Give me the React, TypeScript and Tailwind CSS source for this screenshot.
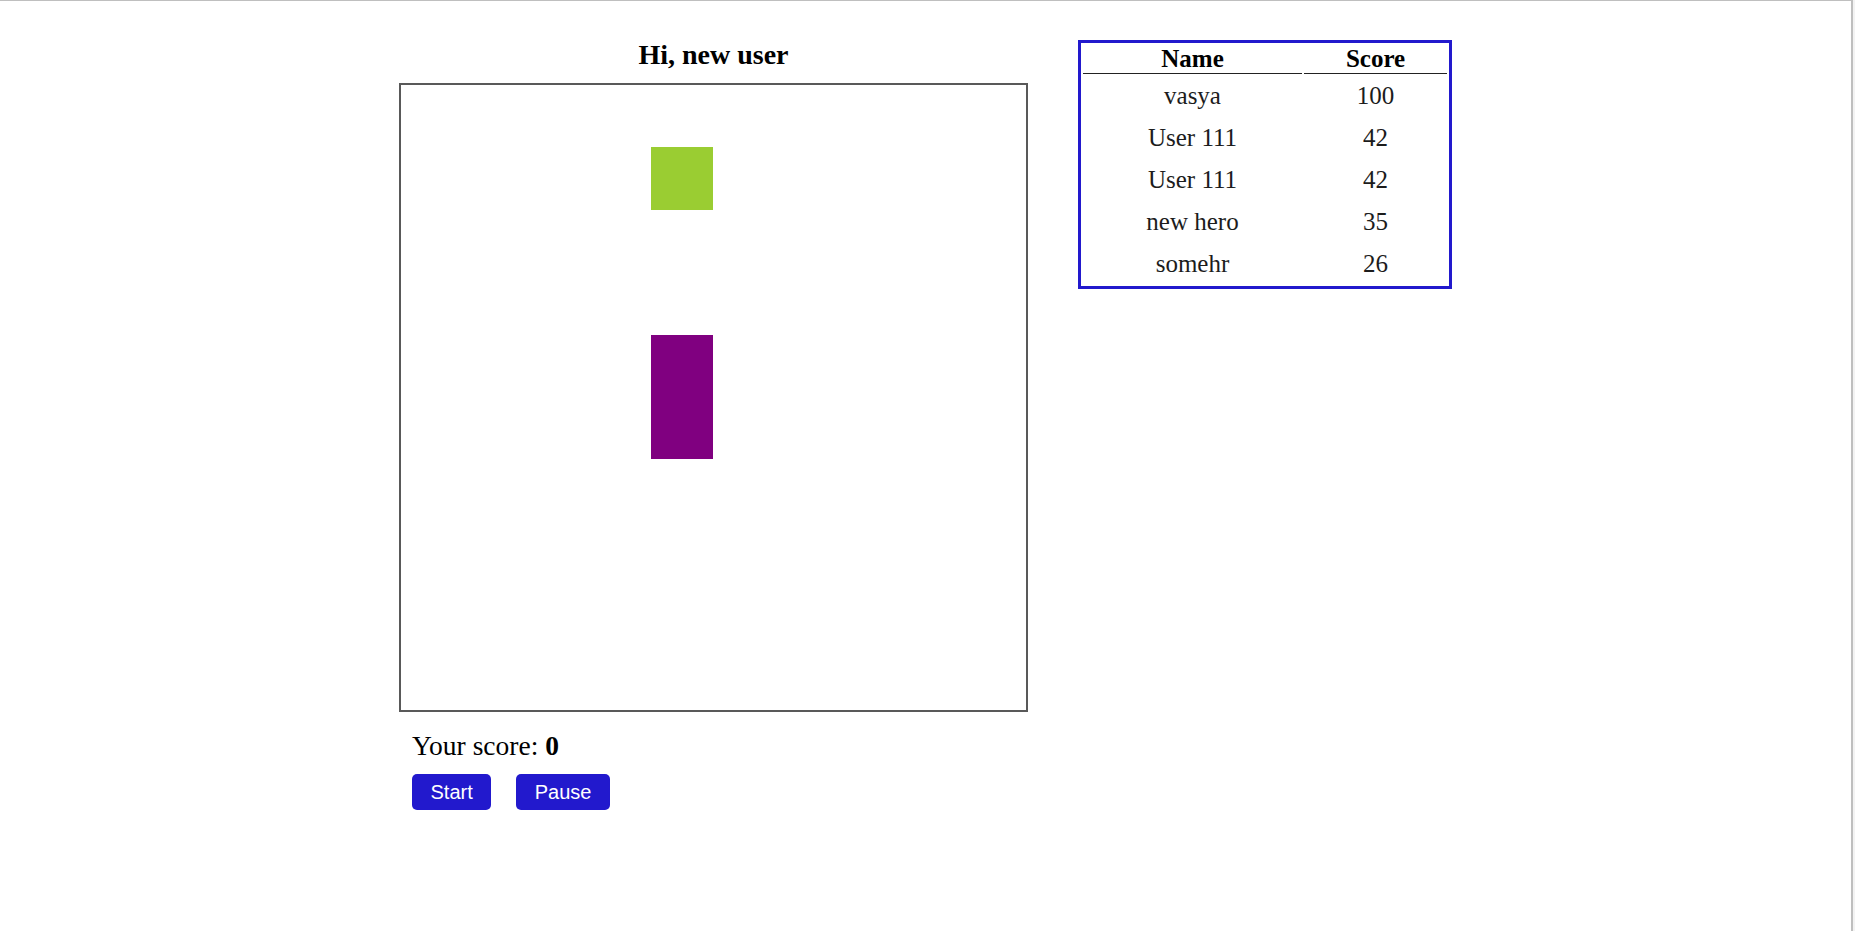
import React from 'react';

const leaders = [
  { name: 'vasya', score: 100 },
  { name: 'User 111', score: 42 },
  { name: 'User 111', score: 42 },
  { name: 'new hero', score: 35 },
  { name: 'somehr', score: 26 },
];

function Board() {
  return (
    <div className="relative w-[629px] h-[629px] border-2 border-[#595959] bg-white">
      {/* food */}
      <div className="absolute left-[250px] top-[62px] w-[62px] h-[63px] bg-[#9acd32]" />
      {/* snake */}
      <div className="absolute left-[250px] top-[250px] w-[62px] h-[124px] bg-[#800080]" />
    </div>
  );
}

function Leaderboard() {
  return (
    <table className="border-separate border-spacing-[2.5px] border-[3px] border-[#2219cd] text-[25px] text-[#1c1c1c]">
      <thead>
        <tr>
          <th className="w-[219px] h-[29px] p-0 font-bold text-black border-b border-[#222] leading-[27px] align-top">
            Name
          </th>
          <th className="w-[143px] h-[29px] p-0 font-bold text-black border-b border-[#222] leading-[27px] align-top">
            Score
          </th>
        </tr>
      </thead>
      <tbody>
        {leaders.map((row, i) => (
          <tr key={i}>
            <td className="h-[40px] p-0 text-center leading-[28px] align-middle">{row.name}</td>
            <td className="h-[40px] p-0 text-center leading-[28px] align-middle">{row.score}</td>
          </tr>
        ))}
      </tbody>
    </table>
  );
}

export default function App() {
  return (
    <div className="flex w-[1855px] h-[931px] bg-white font-['Liberation_Serif',serif] text-black overflow-hidden">
      <div className="flex-1 border-t border-r-2 border-[#bfbfbf] flex justify-center items-start gap-[50px]">
        <div className="flex flex-col pt-[37px]">
          <h2 className="text-[28px] font-bold leading-[34px] text-center mb-[11px]">Hi, new user</h2>
          <Board />
          <p className="mt-[18px] pl-[13px] text-[27.5px] leading-[31.5px]">
            Your score: <b>0</b>
          </p>
          <div className="mt-[12px] pl-[13px] flex gap-[25px] font-['Liberation_Sans',Arial,sans-serif]">
            <button className="h-[36px] px-[18.5px] rounded-[5px] bg-[#2219cd] text-white text-[20px]">Start</button>
            <button className="h-[36px] px-[18.5px] rounded-[5px] bg-[#2219cd] text-white text-[20px]">Pause</button>
          </div>
        </div>
        <div className="pt-[39px]">
          <Leaderboard />
        </div>
      </div>
      <div className="w-[2px] bg-[#f3f3f3]" />
    </div>
  );
}
